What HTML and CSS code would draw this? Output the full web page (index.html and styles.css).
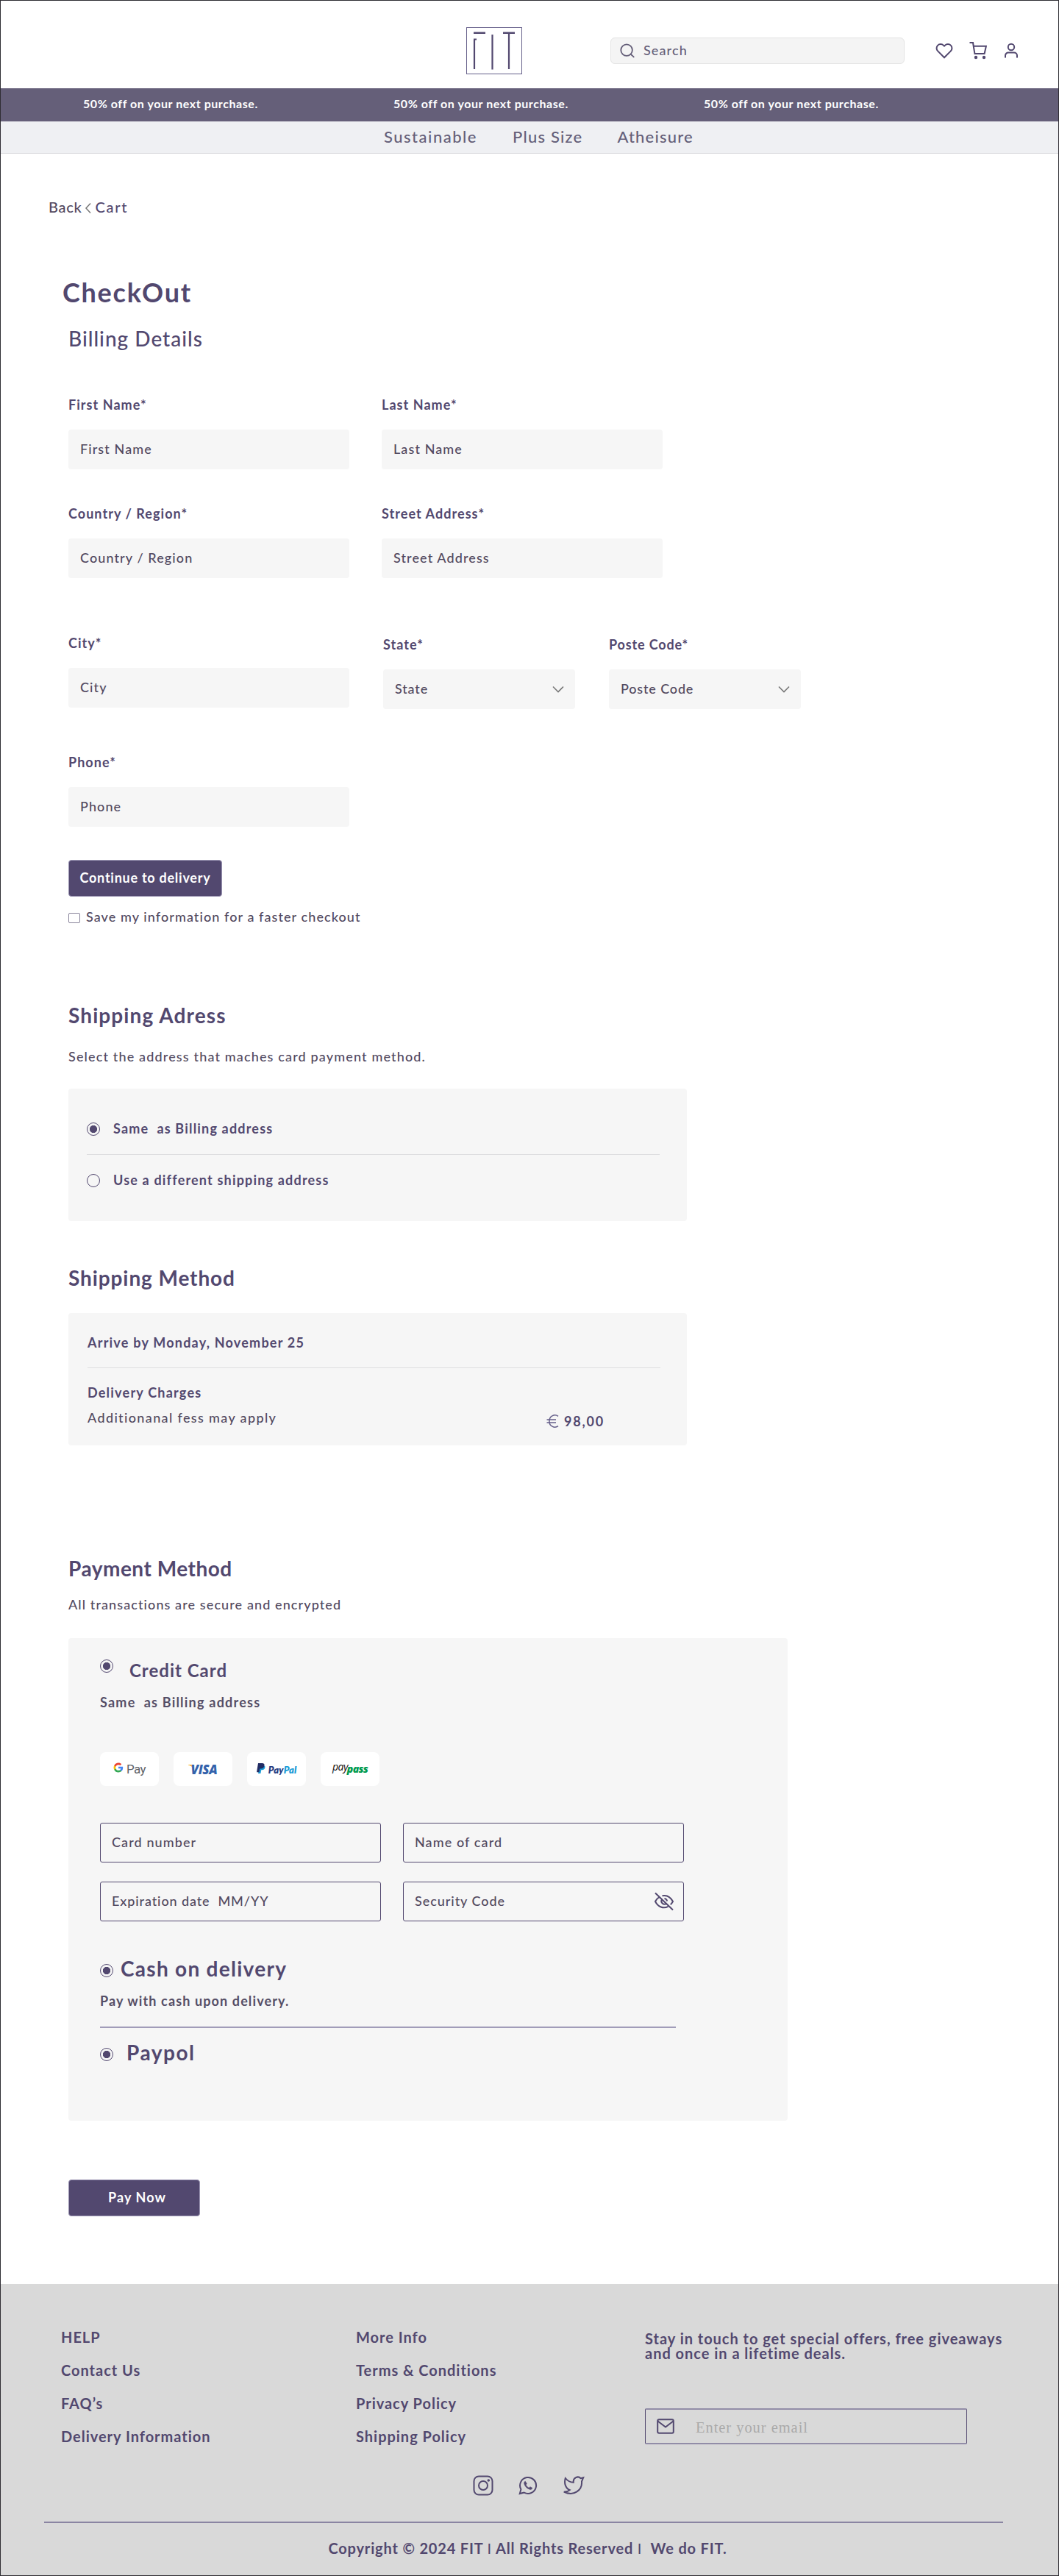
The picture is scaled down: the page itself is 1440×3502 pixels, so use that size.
FILE: index.html
```html
<!DOCTYPE html>
<html lang="en">
<head>
<meta charset="utf-8">
<title>FIT - Checkout</title>
<link rel="stylesheet" href="styles.css">
</head>
<body>
<div class="page">
  <header class="header">
    <svg class="logo" viewBox="0 0 76 64" role="img" aria-label="FIT">
      <rect x=".5" y=".5" width="75" height="63" fill="#fff" stroke="#655f8a"/>
      <path d="M10 7.7h16M50 7.7h16" stroke="#52486f" stroke-width="2.6"/>
      <path d="M11 57V17M10 16.5h4M35.5 10v47.5M58 8v49" fill="none" stroke="#52486f" stroke-width="2.2"/>
    </svg>
    <label class="search">
      <svg width="22" height="22" viewBox="0 0 24 24" fill="none" stroke="#655f79" stroke-width="2" stroke-linecap="round"><circle cx="11" cy="11" r="8.5"/><path d="m17.2 17.2 4.3 4"/></svg>
      <input type="text" placeholder="Search">
    </label>
    <nav class="tools">
      <svg viewBox="0 0 24 24"><path d="M20.84 4.61a5.5 5.5 0 0 0-7.78 0L12 5.67l-1.06-1.06a5.5 5.5 0 0 0-7.78 7.78L12 21.23l8.84-8.84a5.5 5.5 0 0 0 0-7.78z"/></svg>
      <svg viewBox="0 0 24 24"><path d="M.5 1H5l2.4 15h13.2l2.3-10.2H6"/><circle cx="9" cy="21" r="1.2" fill="#52486f"/><circle cx="20" cy="21" r="1.2" fill="#52486f"/></svg>
      <svg viewBox="0 0 24 24"><circle cx="12" cy="7" r="4.2"/><path d="M4 21.5v-3a4 4 0 0 1 4-4h8a4 4 0 0 1 4 4v3"/></svg>
    </nav>
  </header>

  <div class="promo">
    <span>50% off on your next purchase.</span>
    <span>50% off on your next purchase.</span>
    <span>50% off on your next purchase.</span>
  </div>

  <nav class="menu"><a>Sustainable</a><a>Plus Size</a><a>Atheisure</a></nav>

  <main>
    <div class="crumbs">
      <span>Back</span>
      <svg width="10" height="16" viewBox="0 0 10 16"><path d="M8 1.5 2 8l6 6.5" fill="none" stroke="#777" stroke-width="1.5"/></svg>
      <a>Cart</a>
    </div>
    <h1>CheckOut</h1>

    <form class="checkout">
      <h2 class="light">Billing Details</h2>
      <div class="row row-first">
        <label class="field"><b>First Name*</b><input placeholder="First Name"></label>
        <label class="field"><b>Last Name*</b><input placeholder="Last Name"></label>
      </div>
      <div class="row row-address">
        <label class="field"><b>Country / Region*</b><input placeholder="Country / Region"></label>
        <label class="field"><b>Street Address*</b><input placeholder="Street Address"></label>
      </div>
      <div class="row row-city">
        <label class="field"><b>City*</b><input placeholder="City"></label>
        <div class="field narrow"><b>State*</b><div class="select tight"><span>State</span><svg viewBox="0 0 16 10"><path d="M1 1.5 8 8.5l7-7"/></svg></div></div>
        <div class="field narrow"><b class="tight">Poste Code*</b><div class="select tight"><span>Poste Code</span><svg viewBox="0 0 16 10"><path d="M1 1.5 8 8.5l7-7"/></svg></div></div>
      </div>
      <div class="row row-phone">
        <label class="field"><b>Phone*</b><input placeholder="Phone"></label>
      </div>
      <button class="btn btn-continue" type="button">Continue to delivery</button>
      <label class="save"><i></i><span>Save my information for a faster checkout</span></label>

      <h2 class="sec-address">Shipping Adress</h2>
      <p class="note note-address">Select the address that maches card payment method.</p>
      <section class="panel panel-address">
        <div class="option"><i class="radio on"></i><strong>Same&nbsp; as Billing address</strong></div>
        <hr>
        <div class="option"><i class="radio"></i><strong>Use a different shipping address</strong></div>
      </section>

      <h2 class="sec-method">Shipping Method</h2>
      <section class="panel panel-method">
        <strong>Arrive by Monday, November 25</strong>
        <hr>
        <strong>Delivery Charges</strong>
        <div class="charge">
          <span>Additionanal fess may apply</span>
          <div class="price"><svg width="17" height="18" viewBox="0 0 17 18"><path d="M16 2.3A7.6 7.6 0 0 0 4 9a7.6 7.6 0 0 0 12 6.7M.5 7H13M.5 11H13"/></svg><strong>98,00</strong></div>
        </div>
      </section>

      <h2 class="sec-payment">Payment Method</h2>
      <p class="note note-payment">All transactions are secure and encrypted</p>
      <section class="panel panel-payment">
        <div class="pay-head credit"><i class="radio on"></i><h3>Credit Card</h3></div>
        <strong class="muted same">Same&nbsp; as Billing address</strong>
        <div class="brands">
          <div class="brand gpay">
            <svg width="14" height="14" viewBox="0 0 24 24"><path fill="#4285f4" d="M22.56 12.25c0-.78-.07-1.53-.2-2.25H12v4.26h5.92a5.06 5.06 0 0 1-2.2 3.32v2.77h3.57c2.08-1.92 3.27-4.74 3.27-8.1z"/><path fill="#34a853" d="M12 23c2.97 0 5.46-.98 7.28-2.66l-3.57-2.77c-.98.66-2.23 1.06-3.71 1.06-2.86 0-5.29-1.93-6.16-4.53H2.18v2.84A11 11 0 0 0 12 23z"/><path fill="#fbbc05" d="M5.84 14.09a6.6 6.6 0 0 1 0-4.18V7.07H2.18a11 11 0 0 0 0 9.86z"/><path fill="#ea4335" d="M12 5.38c1.62 0 3.06.56 4.21 1.64l3.15-3.15C17.45 2.09 14.97 1 12 1A11 11 0 0 0 2.18 7.07l3.66 2.84C6.71 7.31 9.14 5.38 12 5.38z"/></svg>
            <span>Pay</span>
          </div>
          <div class="brand visa"><svg width="8" height="7" viewBox="0 0 8 7"><path fill="#f9b21a" d="M0 0h4.6c1 0 1.5.5 1.7 1.3L7.5 7C6 3.500 3.500 1.200 0 .6z"/></svg><span>VISA</span></div>
          <div class="brand paypal">
            <svg width="12" height="14" viewBox="0 0 12 14"><path fill="#179bd7" d="M4 4h7.200c.8 2.700-.7 5.200-3.800 5.200H6.200L5.400 14H2z"/><path fill="#222d65" d="M2 0h5.500c2.300 0 3.500 1.400 3 3.600C10 6.400 8.200 7.500 5.600 7.500H4.300l-.9 4.800H0z"/></svg>
            <span class="pal-a">Pay</span><span class="pal-b">Pal</span>
          </div>
          <div class="brand paypass"><span class="pp-a">pay</span><span class="pp-b">pass</span></div>
        </div>
        <div class="card-grid">
          <input placeholder="Card number">
          <input placeholder="Name of card">
          <input class="expiry" placeholder="Expiration date&nbsp; MM/YY">
          <label class="secret"><input placeholder="Security Code">
            <svg width="28" height="28" viewBox="0 0 28 28"><path d="M2 2.500 26 25.500M11.500 6.300C18 4.800 23 8.500 26 14c-.9 1.600-2 3-3.200 4.200M7.500 8C5 9.500 3.200 11.600 2 14c3.800 7.500 11 10.300 17.500 6.800M11 11.200a4.200 4.200 0 0 0 5.900 5.700M14.500 9.900a4.200 4.200 0 0 1 3.600 3.600"/></svg>
          </label>
        </div>
        <div class="pay-head cash"><i class="radio on"></i><h2>Cash on delivery</h2></div>
        <strong class="muted cash-note">Pay with cash upon delivery.</strong>
        <hr class="strong">
        <div class="pay-head paypol"><i class="radio on"></i><h2>Paypol</h2></div>
      </section>
      <button class="btn btn-pay" type="button">Pay Now</button>
    </form>
  </main>

  <footer class="footer">
    <div class="foot-cols">
      <div class="links"><a>HELP</a><a>Contact Us</a><a>FAQ’s</a><a>Delivery Information</a></div>
      <div class="links"><a>More Info</a><a>Terms &amp; Conditions</a><a>Privacy Policy</a><a>Shipping Policy</a></div>
      <div class="signup">
        <p>Stay in touch to get special offers, free giveaways<br>and once in a lifetime deals.</p>
        <label class="email">
          <svg width="24" height="21" viewBox="0 0 24 21"><rect x="1.200" y="1.200" width="21.600" height="18.600" rx="2"/><path d="m1.500 3.500 10.500 8 10.500-8"/></svg>
          <input placeholder="Enter your email">
        </label>
      </div>
    </div>
    <div class="social">
      <svg width="28" height="28" viewBox="0 0 28 28"><rect x="1.500" y="1.500" width="25" height="25" rx="6.500"/><circle cx="14" cy="14" r="6"/><circle cx="21.300" cy="7" r=".8" fill="#52486f"/></svg>
      <svg width="26" height="26" viewBox="0 0 26 26"><path d="m1.800 24 1.600-5.800A11 11 0 1 1 7.600 22.500z"/><path d="M9.300 7.300c-1.500.4-1.900 2.100-1.400 3.600 1.200 3.600 3.900 6.300 7.400 7.400 1.500.4 3.200-.2 3.500-2l-3-1.600-1.500 1.500c-1.900-.8-3.300-2.200-4.200-4.200l1.200-1.500z" fill="#52486f" stroke-width=".6"/></svg>
      <svg width="30" height="26" viewBox="0 0 30 26"><path d="M28.200 2.200 26 7.500C27 19 15.500 28.500 1.800 21.500c3.200.2 6-.6 8-2.400C3.800 16.800 1.800 9.500 3.800 3c3 3.800 6.500 5.700 11 5.700-.9-6.500 6.300-9.300 9.800-5.500z"/></svg>
    </div>
    <p class="copyright">Copyright © 2024 FIT <em>I</em> All Rights Reserved <em>I</em>&nbsp; We do FIT.</p>
  </footer>
</div>
</body>
</html>
```
FILE: styles.css
```css
* { box-sizing: border-box; }
body { margin: 0; background: #fff; }
h1, h2, h3, p, hr { margin: 0; }
i, em { font-style: normal; }

.page {
  width: 1440px;
  height: 3502px;
  border: 1px solid #2f2d33;
  display: flex;
  flex-direction: column;
  font: 500 18px/24px Lato, "Open Sans", sans-serif;
  letter-spacing: 1.1px;
  color: #52495f;
  background: #fff;
}

input {
  font: inherit;
  letter-spacing: inherit;
  color: inherit;
  border: 0;
  background: none;
  outline: 0;
  min-width: 0;
}
input::placeholder { color: inherit; opacity: 1; }

/* Header */
.header { height: 119px; padding: 17px 0 0 633px; display: flex; align-items: center; flex: none; }
.logo { width: 76px; height: 64px; flex: none; }
.search {
  width: 400px; height: 36px; margin-left: 120px; padding: 0 12px;
  display: flex; align-items: center; gap: 6px;
  border: 1px solid #e4e4e4; border-radius: 6px; background: #f4f4f4; color: #655f79;
}
.search svg { margin-left: -1px; }
.search input { padding: 0 4px 3px 5px; }
.tools { margin-left: 42px; display: flex; gap: 22px; }
.tools svg { width: 24px; height: 24px; fill: none; stroke: #52486f; stroke-width: 2; }
.tools svg:last-child { margin-left: -1px; }

.promo {
  height: 45px; padding-left: 112px; flex: none;
  display: grid; grid-template-columns: repeat(3, 422px);
  font-size: 16px; font-weight: 700; line-height: 42px; letter-spacing: .56px;
  color: #fff; background: #655f79;
}
.menu {
  height: 44px; padding-left: 521px; flex: none;
  display: flex;
  font-size: 22px; line-height: 39px; letter-spacing: 1.2px;
  color: #655f79; background: #eff0f3;
  border-top: 1px solid #e3e3e8; border-bottom: 1px solid #dcdcdf;
}
.menu a:first-child { letter-spacing: 1.5px; margin-right: 48px; }
.menu a:last-child { margin-left: 47px; }

/* Checkout */
.crumbs { margin: 60px 0 0 65px; display: flex; align-items: center; gap: 4px; font-size: 20px; letter-spacing: .7px; }
.crumbs svg { margin: 4px 0 0; }
.crumbs a { color: #52486f; letter-spacing: 1.7px; }
h1, h2, h3 { color: #52486f; font-weight: 700; }
h1 { margin: 82px 0 0 84px; font-size: 36px; line-height: 44px; letter-spacing: 1.75px; }
h2 { font-size: 28px; line-height: 34px; letter-spacing: 1.1px; }
h3 { font-size: 24px; line-height: 30px; letter-spacing: 1px; }
.light { margin: 24px 0 0; font-weight: 500; letter-spacing: 1px; }
strong { font-weight: 700; color: #52486f; letter-spacing: 1.22px; }
strong.muted { color: #554e66; }

.checkout { margin-left: 92px; display: flex; flex-direction: column; align-items: flex-start; }
.row { display: flex; gap: 44px; }
.row-first { margin-top: 61px; }
.row-address { margin-top: 48px; }
.row-city { margin-top: 76px; gap: 46px; }
.row-phone { margin-top: 60px; }
.field { width: 382px; display: flex; flex-direction: column; gap: 22px; }
.field b { font-weight: 700; color: #52486f; letter-spacing: 1.05px; }
.field input, .select { height: 54px; padding: 0 15px 2px 16px; border-radius: 4px; background: #f6f6f6; }
.narrow { width: 261px; padding-top: 2px; }
.select { display: flex; align-items: center; justify-content: space-between; }
.select svg { width: 16px; height: 10px; margin-top: 1px; fill: none; stroke: #777; stroke-width: 1.6; }
.field .tight { letter-spacing: .85px; }

.btn {
  height: 50px; padding: 0 0 3px; border: 1px solid #9b95b3; border-radius: 4px;
  font: inherit; font-weight: 700; letter-spacing: .75px; color: #fff; background: #52486f;
}
.btn-continue { width: 209px; margin-top: 45px; }
.save { margin-top: 15px; display: flex; align-items: center; gap: 8px; letter-spacing: 1.08px; }
.save i { width: 16px; height: 14px; margin-top: 3px; border: 1px solid #88839a; border-radius: 2px; background: #fff; }

.sec-address { margin-top: 105px; }
.note-address { margin-top: 27px; letter-spacing: 1.15px; }
.panel { display: flex; flex-direction: column; align-items: flex-start; background: #f6f6f6; border-radius: 4px; }
.panel hr { width: 779px; height: 1px; border: 0; background: #dedee0; }
.panel-address { width: 841px; height: 180px; margin-top: 32px; padding: 42px 25px 0; }
.panel-address hr { margin: 23px 0 22px; }
.option { display: flex; gap: 18px; }
.option strong { letter-spacing: 1.18px; }
.radio { width: 18px; height: 18px; border: 1px solid #52486f; border-radius: 50%; flex: none; }
.radio.on { background: radial-gradient(circle, #52486f 4.800px, transparent 5.400px); }
.option .radio { margin-top: 4px; }

.sec-method { margin-top: 60px; letter-spacing: .9px; }
.panel-method { width: 841px; height: 180px; margin-top: 31px; padding: 28px 25px 0 26px; }
.panel-method hr { margin: 22px 0 21px; }
.charge { margin-top: 10px; display: flex; letter-spacing: 1.36px; }
.charge > span { width: 624px; }
.price { margin-top: 5px; display: flex; gap: 7px; align-items: center; }
.price svg { fill: none; stroke: #655f8a; stroke-width: 1.5; }
.price strong { letter-spacing: 1.8px; }

.sec-payment { margin-top: 150px; letter-spacing: .5px; }
.note-payment { margin-top: 20px; }
.panel-payment { width: 978px; height: 656px; margin-top: 34px; padding: 29px 43px 0; }
.pay-head { display: flex; align-items: flex-start; }
.credit { gap: 22px; }
.same { margin-top: 16px; }
.brands { margin-top: 56px; display: flex; gap: 20px; }
.brand { width: 80px; height: 46px; border-radius: 8px; background: #fff; display: flex; align-items: center; justify-content: center; letter-spacing: 0; line-height: 16px; }
.gpay { gap: 4px; padding-bottom: 4px; }
.gpay span { font: 400 17px/18px Roboto, sans-serif; letter-spacing: -.6px; color: #5f6368; padding-top: 3px; }
.visa { align-items: flex-start; padding: 17px 0 0 0; }
.visa svg { margin-right: -5px; }
.visa span { font: italic 800 17px/13px "Open Sans", sans-serif; letter-spacing: -.3px; color: #3362ab; }
.paypal span { font: italic 800 13px/14px Lato, sans-serif; padding-top: 2px; }
.paypal svg { margin: 0 4px 2px 0; }
.pal-a { color: #253b80; }
.pal-b { color: #179bd7; }
.paypass span { font: italic 500 14px/14px "Open Sans", sans-serif; letter-spacing: -.5px; }
.paypass .pp-a { color: #111; padding-bottom: 6px; }
.paypass .pp-b { color: #009a4e; font-weight: 800; letter-spacing: -.7px; margin-left: -1px; }

.card-grid { margin-top: 50px; display: grid; grid-template-columns: 382px 382px; gap: 26px 30px; }
.card-grid > * { height: 54px; padding: 0 15px 3px; border: 1px solid #52486f; border-radius: 3px; }
.card-grid .expiry { letter-spacing: .9px; }
.secret { display: flex; align-items: center; justify-content: space-between; }
.card-grid .secret { padding-right: 12px; }
.secret input { padding: 0; letter-spacing: .95px; }
.secret svg { margin-top: 3px; fill: none; stroke: #52486f; stroke-width: 2; }
.cash { margin-top: 47px; gap: 10px; }
.cash h2 { letter-spacing: 1.28px; }
.cash .radio, .paypol .radio { margin-top: 11px; }
.cash-note { margin-top: 15px; letter-spacing: 1.12px; }
.panel hr.strong { width: 783px; height: 2px; margin: 23px 0 16px; background: #a19cb9; }
.paypol { gap: 18px; }
.paypol h2 { letter-spacing: 1.5px; }
.btn-pay { width: 179px; margin-top: 80px; padding-left: 8px; letter-spacing: 1.1px; }

/* Footer */
.footer {
  height: 396px; margin-top: auto; padding-top: 60px; flex: none;
  font-size: 20px; font-weight: 700; letter-spacing: .98px; color: #52486f; background: #d9d9d9;
}
.foot-cols { padding-left: 82px; display: grid; grid-template-columns: 401px 393px 1fr; }
.links { display: flex; flex-direction: column; gap: 21px; }
.signup p { margin-top: 4px; line-height: 20px; white-space: nowrap; }
.email {
  width: 438px; height: 49px; margin-top: 65px; padding-left: 15px;
  display: flex; align-items: center; gap: 27px;
  border: 1px solid #52486f; border-top: 2px solid #928da8; border-bottom: 2px solid #928da8; border-radius: 2px;
}
.email svg, .social svg { fill: none; stroke: #52486f; stroke-width: 2; }
.email input { width: 300px; padding-top: 3px; font: 400 20.500px/24px "Liberation Serif", serif; letter-spacing: .95px; color: #aaa; }
.social { margin-top: 41px; padding-left: 642px; display: flex; align-items: center; gap: 34px; }
.copyright { width: 1304px; margin: 35px 0 0 59px; padding: 22px 0 0 11px; border-top: 2px solid #8a85a2; text-align: center; letter-spacing: .83px; }
.copyright em { font-weight: 400; }
```
